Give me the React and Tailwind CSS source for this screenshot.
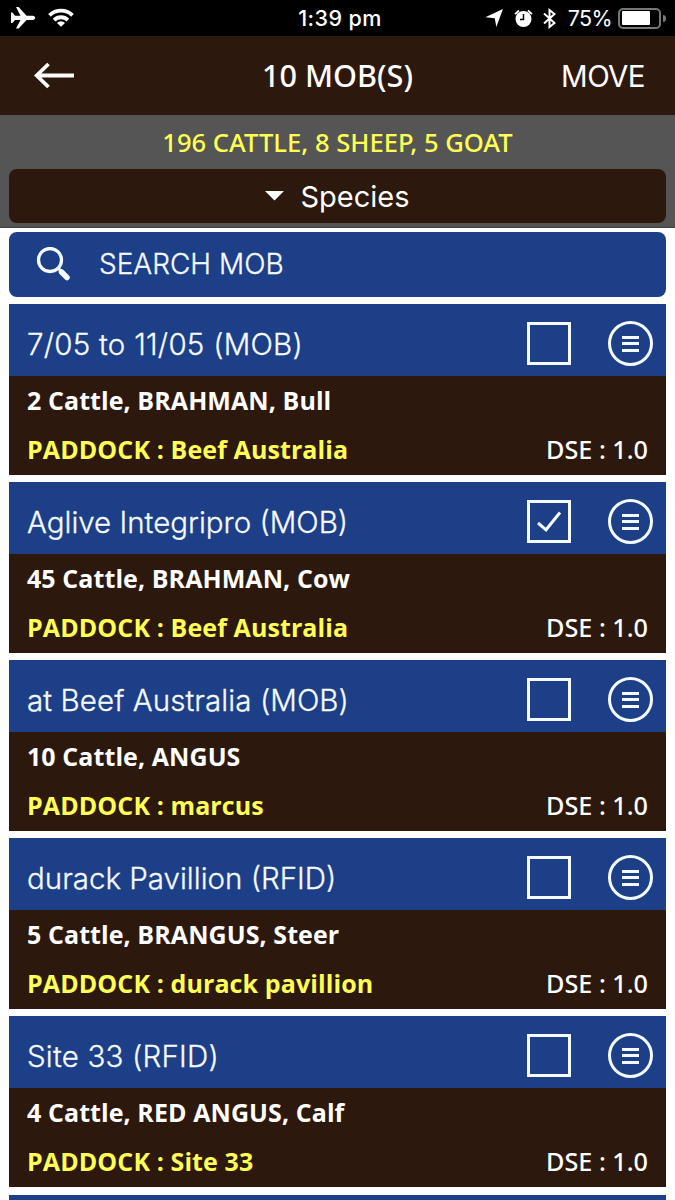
import { clsx } from "clsx";

const mobs = [
  { name: "7/05 to 11/05 (MOB)", detail: "2 Cattle, BRAHMAN, Bull", paddock: "Beef Australia", dse: "1.0", className: "tracking-[0.25px]" },
  { name: "Aglive Integripro (MOB)", detail: "45 Cattle, BRAHMAN, Cow", paddock: "Beef Australia", dse: "1.0", checked: true },
  { name: "at Beef Australia (MOB)", detail: "10 Cattle, ANGUS", paddock: "marcus", dse: "1.0", className: "tracking-[0.08px]" },
  { name: "durack Pavillion (RFID)", detail: "5 Cattle, BRANGUS, Steer", paddock: "durack pavillion", dse: "1.0" },
  { name: "Site 33 (RFID)", detail: "4 Cattle, RED ANGUS, Calf", paddock: "Site 33", dse: "1.0", className: "tracking-[0.2px]" },
];

function StatusBar() {
  return (
    <div className="grid h-9 shrink-0 grid-cols-[1fr_auto_1fr] items-center bg-black pr-[9px] pl-[10px]">
      <div className="flex items-center gap-3">
        <svg width="26" height="24" viewBox="0 0 26 24" fill="currentColor">
          <path d="M1 6.5h1.5l2.5 3.2h5.5L6 1h2.6l8 8.7h6c1.6 0 2.6 1 2.6 2.1s-1 2.1-2.6 2.1h-6L8.6 22.6H6l4.5-8.7H5l-2.5 3.2H1z" />
        </svg>
        <svg width="26" height="20" viewBox="0 0 26 20" fill="none" stroke="currentColor" strokeWidth="3.8">
          <path d="M1.5 7.3a16.3 16.3 0 0 1 23 0" />
          <path d="M6.1 12.1a9.8 9.8 0 0 1 13.8 0" />
          <path d="M13 18.8 9 14.9a5.7 5.7 0 0 1 8 0z" fill="currentColor" stroke="none" />
        </svg>
      </div>
      <span className="pt-0.5 pl-1 text-[21.5px] leading-none font-medium tracking-[0.4px]">1:39 pm</span>
      <div className="flex items-center justify-end">
        <svg width="18" height="18" viewBox="0 0 18 18" fill="currentColor" className="mr-[11px]">
          <path d="M18 0 11.3 18 9.8 9.3.3 8.3z" />
        </svg>
        <svg width="19" height="19" viewBox="0 0 19 19" className="mr-2.5">
          <circle cx="9.5" cy="10" r="8" fill="#fff" />
          <path d="M1 5.2 5 1.5M18 5.2l-4-3.7" stroke="#fff" strokeWidth="1.8" />
          <path d="M9.5 5v5.5H6" fill="none" stroke="#000" strokeWidth="1.5" />
        </svg>
        <svg width="13" height="21" viewBox="0 0 13 21" fill="none" stroke="currentColor" strokeWidth="2" className="mr-3">
          <path d="M1 5.5 11.5 15l-5 4v-17l5 4L1 15.5" />
        </svg>
        <span className="mr-1.5 pt-px text-[21.5px] leading-none tracking-[-0.6px]">75%</span>
        <span className="flex h-[21px] w-[43px] rounded-[5px] border-2 border-[#777] p-[1.5px]">
          <span className="w-7 rounded-[1px] bg-white" />
        </span>
        <span className="ml-0.5 h-[7px] w-[3px] rounded-r-full bg-[#777]" />
      </div>
    </div>
  );
}

function Header() {
  return (
    <header className="grid h-[79px] shrink-0 grid-cols-[1fr_auto_1fr] items-center bg-[#2c180d] pr-[30px] pl-[34px]">
      <svg width="41" height="28" viewBox="0 0 41 28" fill="none" stroke="currentColor" strokeWidth="3.8">
        <path d="M40 13.5H3M14.5 2 2.7 13.5l11.8 11.5" />
      </svg>
      <h1 className="pr-1 font-['Noto_Sans'] text-[30.6px] leading-none font-medium">10 MOB(S)</h1>
      <button className="justify-self-end pt-0.5 text-[29.5px] leading-none tracking-[-0.6px]">MOVE</button>
    </header>
  );
}

function Checkbox({ checked }) {
  return (
    <span className="flex h-[43px] w-11 items-center justify-center border-[3px] border-[#f5faff]">
      {checked ? (
        <svg width="26" height="22" viewBox="0 0 26 22" fill="none" stroke="#f5faff" strokeWidth="3">
          <path d="M2 12 10 18.8 24 1.5" />
        </svg>
      ) : null}
    </span>
  );
}

function MenuButton() {
  return (
    <button className="flex h-[45px] w-[45px] flex-col items-center justify-center gap-[3.5px] rounded-full border-3 border-[#f5faff]">
      <span className="h-[3px] w-[17px] bg-[#f5faff]" />
      <span className="h-[3px] w-[17px] bg-[#f5faff]" />
      <span className="h-[3px] w-[17px] bg-[#f5faff]" />
    </button>
  );
}

function MobCard({ mob }) {
  return (
    <article className="shrink-0">
      <div className="flex h-[72px] items-center bg-[#1d3f87] pr-[13px] pl-[18px]">
        <h2
          className={clsx(
            "grow pt-2 text-[29.5px] leading-9 font-light text-[#f5faff] [-webkit-text-stroke:0.3px]",
            mob.className
          )}
        >
          {mob.name}
        </h2>
        <div className="flex items-center gap-[37px] pt-[7px]">
          <Checkbox checked={mob.checked} />
          <MenuButton />
        </div>
      </div>
      <div className="h-[99px] bg-[#2c180d] px-[18px] pt-[5px] font-['Open_Sans'] text-[25px] leading-[38px]">
        <p className="font-bold tracking-[0.08px]">{mob.detail}</p>
        <div className="mt-[11px] flex justify-between">
          <p className="font-bold tracking-[0.1px] text-[#ffff54]">PADDOCK : {mob.paddock}</p>
          <p className="font-['Noto_Sans'] text-[25.2px] font-medium">DSE : {mob.dse}</p>
        </div>
      </div>
    </article>
  );
}

export default function App() {
  return (
    <div className="flex h-[1200px] w-[675px] flex-col overflow-hidden bg-white font-['Inter',sans-serif] text-white">
      <StatusBar />
      <Header />
      <section className="h-[113px] shrink-0 border-b border-[#3f3f3f] bg-[#555] px-[9px] text-center">
        <p className="h-[54px] pt-[9px] font-['Noto_Sans'] text-[25.6px] leading-[38px] font-medium text-[#ffff54]">
          196 CATTLE, 8 SHEEP, 5 GOAT
        </p>
        <button className="flex h-[54px] w-full items-center justify-center gap-4 rounded-lg bg-[#2c180d] text-[29px] leading-none">
          <svg width="19" height="10" viewBox="0 0 19 10" fill="currentColor">
            <path d="M0 0h19L9.5 9.5z" />
          </svg>
          Species
        </button>
      </section>
      <main className="px-[9px] pt-1">
        <div className="flex h-[65px] items-center rounded-lg bg-[#1d3f87] pl-[27px] text-[#f5faff]">
          <svg width="36" height="36" viewBox="0 0 36 36" fill="none" stroke="currentColor">
            <circle cx="14" cy="13" r="11.5" strokeWidth="3.3" />
            <path d="m22 21 2.5 2.5" strokeWidth="3" />
            <path d="m25.5 25 5.5 5.5" strokeWidth="5.5" strokeLinecap="round" />
          </svg>
          <span className="ml-[27px] pb-0.5 text-[28px] leading-none font-light [-webkit-text-stroke:0.3px]">
            SEARCH MOB
          </span>
        </div>
        <div className="mt-[7px] flex flex-col gap-[7.12px]">
          {mobs.map((mob) => (
            <MobCard key={mob.name} mob={mob} />
          ))}
          <div className="h-[72px] bg-[#1d3f87]" />
        </div>
      </main>
    </div>
  );
}
